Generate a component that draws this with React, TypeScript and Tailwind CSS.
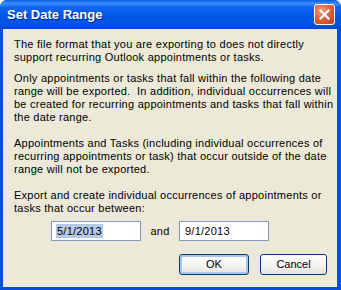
import React from 'react';

const paragraphs = [
  ['The file format that you are exporting to does not directly', 'support recurring Outlook appointments or tasks.'],
  [
    'Only appointments or tasks that fall within the following date',
    'range will be exported.\u00a0 In addition, individual occurrences will',
    'be created for recurring appointments and tasks that fall within',
    'the date range.',
  ],
  [
    'Appointments and Tasks (including individual occurrences of',
    'recurring appointments or task) that occur outside of the date',
    'range will not be exported.',
  ],
  ['Export and create individual occurrences of appointments or', 'tasks that occur between:'],
];

const margins = ['mt-0', 'mt-[8px]', 'mt-[13px]', 'mt-[13px]'];

function CloseButton() {
  return (
    <div className="w-[21px] h-[21px] rounded-[3px] border border-white bg-[radial-gradient(circle_at_35%_30%,#F0A080_0%,#E2603A_45%,#C4401C_100%)] flex items-center justify-center">
      <svg width="13" height="13" viewBox="0 0 13 13">
        <path d="M2.5 2.5 L10.5 10.5 M10.5 2.5 L2.5 10.5" stroke="white" strokeWidth="2.2" strokeLinecap="square" />
      </svg>
    </div>
  );
}

export default function App() {
  return (
    <div
      className="w-[341px] h-[290px] flex flex-col bg-[#0A4FDB] rounded-t-[7px] overflow-hidden text-black"
      style={{ fontFamily: '"Liberation Sans", Arial, sans-serif' }}
    >
      {/* title bar */}
      <div className="h-[29px] shrink-0 flex items-center justify-between pl-[7px] pr-[6px] bg-[linear-gradient(180deg,#0A5AE8_0%,#3C8EF8_12%,#1066F0_25%,#0058E8_55%,#0053DF_85%,#0149CE_100%)]">
        <span className="text-white font-bold text-[13px] leading-none [text-shadow:1px_1px_#0A1E8C]">
          Set Date Range
        </span>
        <CloseButton />
      </div>

      {/* body */}
      <div className="flex-1 flex flex-col mx-[3px] mb-[3px] mr-[4px] bg-[#ECE9D8] pt-[9px] pl-[11px] pr-[10px] text-[11px] leading-[13px]">
        {paragraphs.map((lines, i) => (
          <p key={i} className={`${margins[i]} whitespace-nowrap tracking-[0.25px]`}>
            {lines.map((l, j) => (
              <span key={j} className="block">
                {l}
              </span>
            ))}
          </p>
        ))}

        <div className="mt-[6px] pl-[37px] flex items-center tracking-[0.25px]">
          <div className="w-[90px] h-[20px] bg-white border border-[#7F9DB9] flex items-center pl-[4px]">
            <span className="bg-[#B5C9E8] leading-[14px] px-[1px]">5/1/2013</span>
          </div>
          <span className="w-[38px] text-center">and</span>
          <div className="w-[90px] h-[20px] bg-white border border-[#7F9DB9] flex items-center pl-[5px]">
            9/1/2013
          </div>
        </div>

        <div className="mt-[13px] flex justify-end gap-[11px]">
          <button className="w-[70px] h-[21px] rounded-[3px] border border-[#003C74] bg-[linear-gradient(180deg,#FFFFFF_0%,#F3F2EE_60%,#E3E1D8_100%)] shadow-[inset_0_0_0_2px_#A9C4F0] text-[11px]">
            OK
          </button>
          <button className="w-[67px] h-[21px] rounded-[3px] border border-[#003C74] bg-[linear-gradient(180deg,#FFFFFF_0%,#F3F2EE_60%,#E3E1D8_100%)] text-[11px]">
            Cancel
          </button>
        </div>
      </div>
    </div>
  );
}
